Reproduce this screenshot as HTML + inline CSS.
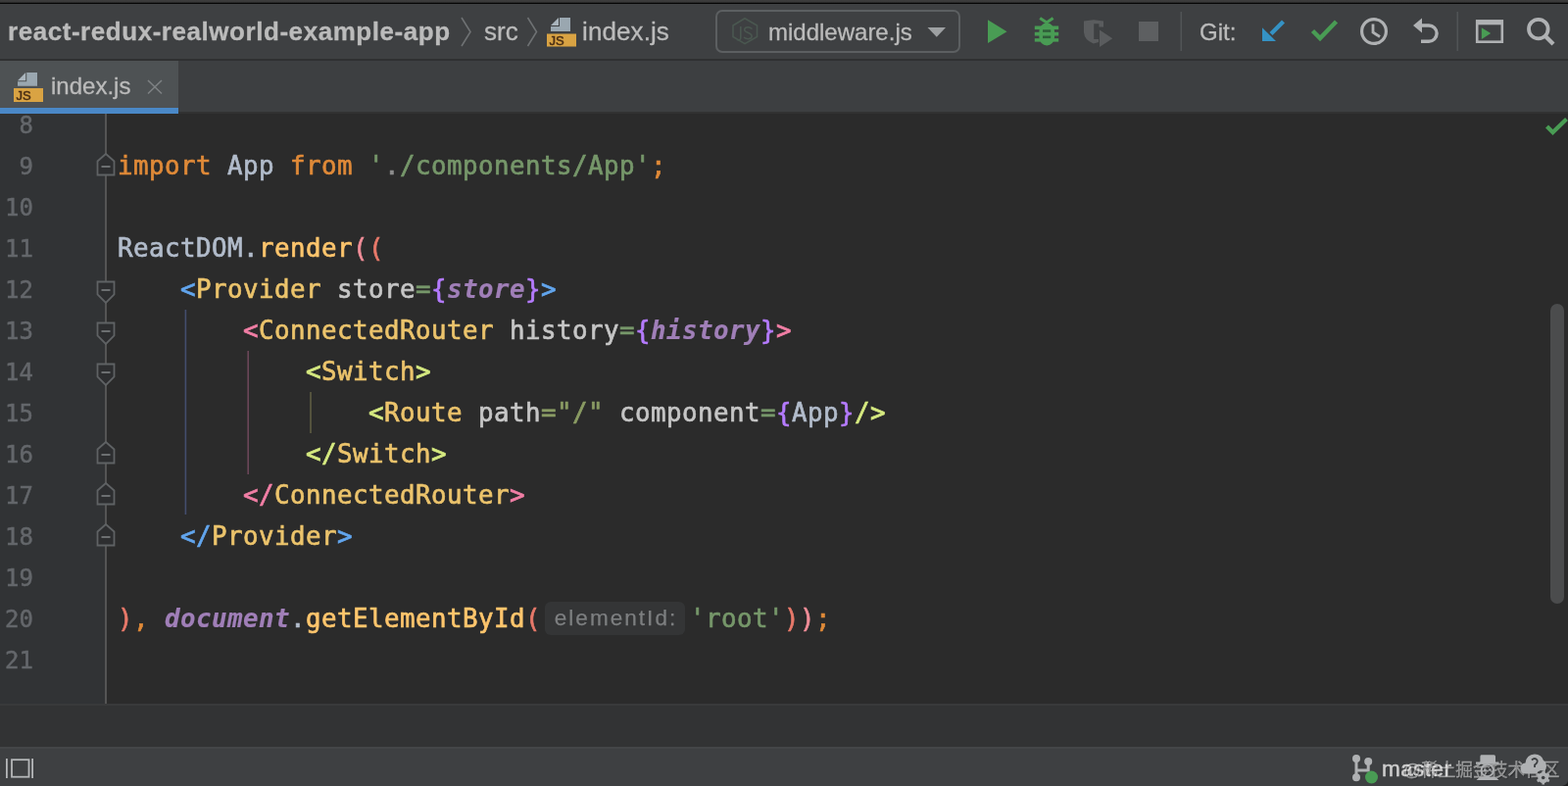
<!DOCTYPE html>
<html lang="en">
<head>
<meta charset="utf-8">
<title>index.js</title>
<style>
*{box-sizing:border-box;margin:0;padding:0}
html,body{width:1600px;height:802px;overflow:hidden;background:#2b2b2b}
body{position:relative;font-family:"Liberation Sans","Noto Sans CJK SC",sans-serif;color:#bbbbbb}
.abs{position:absolute}
.code,.ln,.ui,.hint{will-change:transform}
#topline{left:0;top:0;width:1600px;height:4px;background:linear-gradient(#3d3d3d 0,#383838 2.4px,#0a0a0a 2.7px,#050505 3.7px,#3e4042 4px)}
#toolbar{left:0;top:3px;width:1600px;height:58px;background:#3e4042}
#tbborder{left:0;top:60px;width:1600px;height:2px;background:#2f3031}
#tabs{left:0;top:62px;width:1600px;height:54px;background:#3d3f41}
#tab{left:0;top:62px;width:182px;height:48px;background:#4e5254}
#tabline{left:0;top:110px;width:182px;height:6px;background:#4a88c7}
#tabsborder{left:182px;top:114px;width:1418px;height:2px;background:#323232}
#gutter{left:0;top:116px;width:107px;height:602px;background:#313335}
#gutline{left:107px;top:116px;width:2px;height:602px;background:#555555}
#editor{left:109px;top:116px;width:1491px;height:602px;background:#2b2b2b}
#band{left:0;top:718px;width:1600px;height:44px;background:#323334}
#bandtop{left:0;top:718px;width:1600px;height:2px;background:#393a3b}
#status{left:0;top:762px;width:1600px;height:40px;background:#3e4042}
#statustop{left:0;top:762px;width:1600px;height:2px;background:#444648}
.ui{position:absolute;white-space:nowrap;color:#bbbbbb;font-size:24px;line-height:30px;-webkit-text-stroke:0.3px currentColor}
.ln{position:absolute;left:0;width:34px;text-align:right;font-family:"DejaVu Sans Mono","Liberation Mono",monospace;font-size:24px;line-height:42px;height:42px;color:#64676b;white-space:pre;-webkit-text-stroke:0.5px currentColor}
.code{position:absolute;left:120px;font-family:"DejaVu Sans Mono","Liberation Mono",monospace;font-size:25.8px;letter-spacing:0.468px;line-height:42px;height:42px;white-space:pre;color:#b2bccb;-webkit-text-stroke:0.65px currentColor}
.k{color:#e08a38}.s{color:#76976a}.f{color:#ffc66d}.t{color:#ecc46c}.a{color:#c6c6c6}.d{color:#8c8c8c}.v{color:#8a9b63}
.g{color:#a07fb8;font-style:italic;font-weight:bold;-webkit-text-stroke:0.2px currentColor}
.r1{color:#f08d98}.r2{color:#e8796a}.r3{color:#62a6ee}.r4{color:#f27fa6}.r5{color:#d6ea80}.r6{color:#b57bff}
.hint{position:absolute;background:#343536;border-radius:6px;color:#7d7f80;font-family:"Liberation Sans",sans-serif;font-size:22.5px;letter-spacing:2.05px;line-height:33px;height:34px;padding:0 0 0 2px;text-align:center;-webkit-text-stroke:0.25px currentColor}
.guide{position:absolute;width:2px}
</style>
</head>
<body>
<div class="abs" id="toolbar"></div>
<div class="abs" id="topline"></div>
<div class="abs" id="tbborder"></div>
<div class="abs" id="tabs"></div>
<div class="abs" id="tab"></div>
<div class="abs" id="tabline"></div>
<div class="abs" id="tabsborder"></div>
<div class="abs" id="gutter"></div>
<div class="abs" id="gutline"></div>
<div class="abs" id="editor"></div>
<div class="abs" id="band"></div>
<div class="abs" id="bandtop"></div>
<div class="abs" id="status"></div>
<div class="abs" id="statustop"></div>

<!-- toolbar text -->
<div class="ui" id="crumb1" style="left:8px;top:17px;font-weight:bold;font-size:26px;letter-spacing:0.55px">react-redux-realworld-example-app</div>
<div class="ui" id="crumb2" style="left:494px;top:17px;font-size:26px">src</div>
<div class="ui" id="crumb3" style="left:594px;top:17px;font-size:26px;letter-spacing:0.1px">index.js</div>
<div class="ui" id="runcfg" style="left:784px;top:18px">middleware.js</div>
<div class="ui" id="gitlbl" style="left:1224px;top:18px">Git:</div>
<div class="ui" id="tabname" style="left:52px;top:73px">index.js</div>
<div class="ui" id="branch" style="left:1410px;top:770px;font-size:22.5px;letter-spacing:0.45px;color:#cdcdcd;-webkit-text-stroke:0.5px #cdcdcd">master</div>
<div class="ui" id="wm" style="left:1432px;top:771px;font-size:17.7px;color:rgba(255,255,255,.42);text-shadow:1px 1px 1px rgba(0,0,0,.35)">@稀土掘金技术社区</div>


<!-- ICONS-START -->
<svg class="abs" id="tbicons" style="left:0;top:0" width="1600" height="62" viewBox="0 0 1600 62">
  <!-- breadcrumb chevrons -->
  <polyline points="471,18 480,32.5 471,47" fill="none" stroke="#6e7173" stroke-width="1.6"/>
  <polyline points="538.5,18 547.5,32.5 538.5,47" fill="none" stroke="#6e7173" stroke-width="1.6"/>
  <!-- js file icon -->
  <g id="jsicon1">
    <path d="M571,18 H582 V32 H562 V27 H571 Z" fill="#9aa7b0"/>
    <path d="M570,18 V26 H562 Z" fill="#a9b4bc"/>
    <rect x="558" y="34.5" width="30" height="13" fill="#d9a343"/>
    <text x="560.5" y="45.8" font-family="Liberation Sans, sans-serif" font-size="13" fill="#4a2e14" stroke="#4a2e14" stroke-width="0.5">JS</text>
  </g>
  <!-- run config box -->
  <rect x="731" y="11" width="248" height="42" rx="6" ry="6" fill="none" stroke="#5c5f61" stroke-width="2"/>
  <g fill="none" stroke="#4a5750" stroke-width="1.600">
    <path d="M760,18.800 L772.500,26 V37.500 L760,44.600 L748,37.500 V26 Z"/>
    <path d="M755.800,27 V38.500 Q755.800,41.800 752,40.500"/>
    <path d="M767.500,29.500 Q764,26.500 760.500,28.500 Q758,31.500 763,33.300 Q768.800,35.500 766.500,38.800 Q763,41 759,38.200"/>
  </g>
  <path d="M946.5,28 H965 L955.8,37.8 Z" fill="#9da0a2"/>
  <!-- run -->
  <path d="M1008,20.3 L1027.5,32.2 L1008,44 Z" fill="#499c54"/>
  <!-- debug bug -->
  <g id="bug" fill="#499c54">
    <path d="M1061.200,18.500 L1068,22.900 L1074.600,18.500" fill="none" stroke="#499c54" stroke-width="3"/>
    <rect x="1060.400" y="23.600" width="15.600" height="23" rx="7.800" ry="8.500"/>
    <rect x="1055.800" y="26.500" width="24.400" height="3.600"/>
    <rect x="1055.800" y="32.800" width="24.400" height="3.700"/>
    <rect x="1055.800" y="39.200" width="24.400" height="3.400"/>
    <rect x="1064" y="30.300" width="8.200" height="2.500" fill="#2f5e39"/>
    <rect x="1064" y="36.500" width="8.200" height="2.600" fill="#2f5e39"/>
  </g>
  <!-- coverage (disabled) -->
  <path d="M1106,21.600 L1116,20.200 L1126,21.600 V27.600 H1121.400 V24.200 H1116.200 V40 H1121 V43 Q1118.500,44 1115.800,44.400 Q1106.500,41 1106,33 Z" fill="#5a5c5e"/>
  <path d="M1122,30.500 L1135.200,39.200 L1122,48 Z" fill="#5a5c5e" stroke="#3e4042" stroke-width="1.800" paint-order="stroke"/>
  <!-- stop (disabled) -->
  <rect x="1162" y="22" width="20" height="20" fill="#5d5f61"/>
  <!-- separators -->
  <rect x="1204.500" y="12" width="1.500" height="40" fill="#515456"/>
  <rect x="1486.500" y="12" width="1.500" height="40" fill="#515456"/>
  <!-- git update (blue arrow) -->
  <path d="M1309.500,22 L1297,34.500" stroke="#3592c4" stroke-width="4.200" fill="none"/>
  <path d="M1288,28.200 V42 H1302 Z" fill="#3592c4"/>
  <!-- git commit (green check) -->
  <polyline points="1339.500,31.500 1347,39 1363.500,22" fill="none" stroke="#499c54" stroke-width="4.400"/>
  <!-- history clock -->
  <circle cx="1402" cy="32" r="12.400" fill="none" stroke="#afb1b3" stroke-width="3.200"/>
  <polyline points="1401,24.500 1401,33 1408,37.500" fill="none" stroke="#afb1b3" stroke-width="2.800"/>
  <!-- rollback -->
  <path d="M1442,26 L1451,18.500 V33.500 Z" fill="#afb1b3"/>
  <path d="M1450,26 H1458 A8,8 0 0 1 1458,42.200 H1450" fill="none" stroke="#afb1b3" stroke-width="3.400"/>
  <!-- run anything window -->
  <rect x="1507.200" y="21.500" width="25.600" height="21.200" fill="none" stroke="#afb1b3" stroke-width="2.600"/>
  <rect x="1506" y="20.300" width="28" height="5" fill="#afb1b3"/>
  <path d="M1511.800,28.200 L1521.200,34 L1511.800,39.900 Z" fill="#499c54"/>
  <!-- search -->
  <circle cx="1569.800" cy="29.600" r="9.800" fill="none" stroke="#afb1b3" stroke-width="3.800"/>
  <path d="M1576.500,36.500 L1585,45" stroke="#afb1b3" stroke-width="4.200" fill="none"/>
</svg>

<svg class="abs" id="tabicons" style="left:0;top:62px" width="200" height="54" viewBox="0 62 200 54">
  <path d="M27.200,74 H38 V87.800 H18 V83.200 H27.200 Z" fill="#9aa7b0"/>
  <path d="M26.200,74 V82.200 H18 Z" fill="#a9b4bc"/>
  <rect x="14" y="90" width="30" height="14" fill="#d9a343"/>
  <text x="16.500" y="101.800" font-family="Liberation Sans, sans-serif" font-size="13" fill="#4a2e14" stroke="#4a2e14" stroke-width="0.5">JS</text>
  <path d="M151,82 L165,95.500 M165,82 L151,95.500" stroke="#7d8183" stroke-width="1.600" fill="none"/>
</svg>

<!-- editor: gutter fold markers, guides, checkmark, scrollbar -->
<svg class="abs" id="edicons" style="left:0;top:116px" width="1600" height="602" viewBox="0 116 1600 602">
  <g fill="#2d2e30" stroke="#5f6264" stroke-width="1.800">
    <!-- end markers (pointing up): rows 9,16,17,18 -->
    <path d="M108,157 L116.500,164.500 V178.500 H99.500 V164.500 Z"/>
    <path d="M108,451 L116.500,458.500 V472.500 H99.500 V458.500 Z"/>
    <path d="M108,493 L116.500,500.500 V514.500 H99.500 V500.500 Z"/>
    <path d="M108,535 L116.500,542.500 V556.500 H99.500 V542.500 Z"/>
    <!-- start markers (pointing down): rows 12,13,14 -->
    <path d="M99.500,287.500 H116.500 V300.500 L108,309 L99.500,300.500 Z"/>
    <path d="M99.500,329.500 H116.500 V342.500 L108,351 L99.500,342.500 Z"/>
    <path d="M99.500,371.500 H116.500 V384.500 L108,393 L99.500,384.500 Z"/>
  </g>
  <g stroke="#6c6f71" stroke-width="2">
    <path d="M103.500,170 H112.500"/>
    <path d="M103.500,464 H112.500"/>
    <path d="M103.500,506 H112.500"/>
    <path d="M103.500,548 H112.500"/>
    <path d="M103.500,296 H112.500"/>
    <path d="M103.500,338 H112.500"/>
    <path d="M103.500,380 H112.500"/>
  </g>
  <!-- indent guides -->
  <rect x="188.600" y="316" width="1.600" height="209" fill="#444e6e"/>
  <rect x="252.400" y="358" width="1.600" height="126" fill="#6a4658"/>
  <rect x="316.200" y="400" width="1.600" height="42" fill="#5f5d42"/>
  <!-- inspection ok checkmark -->
  <polyline points="1578.500,129 1584.500,135 1598.500,121.500" fill="none" stroke="#499c54" stroke-width="4.200"/>
  <!-- scrollbar thumb -->
  <rect x="1582" y="310" width="14" height="306" rx="7" ry="7" fill="#4b4c4d"/>
</svg>

<!-- status bar icons -->
<svg class="abs" id="sticons" style="left:0;top:762px" width="1600" height="40" viewBox="0 762 1600 40">
  <rect x="12" y="775.200" width="17.500" height="17.500" fill="none" stroke="#b5b7b9" stroke-width="1.800"/>
  <rect x="6" y="774" width="1.800" height="20" fill="#b5b7b9"/>
  <rect x="32.200" y="774" width="1.800" height="20" fill="#b5b7b9"/>
  <!-- git branch -->
  <g stroke="#afb1b3" stroke-width="3" fill="none">
    <path d="M1384,774 V793"/>
    <path d="M1384,786 H1396.200 V777"/>
  </g>
  <circle cx="1384" cy="774" r="4" fill="#afb1b3"/>
  <circle cx="1384" cy="793.300" r="4" fill="#afb1b3"/>
  <circle cx="1396.200" cy="777" r="4" fill="#afb1b3"/>
  <circle cx="1399.500" cy="793" r="6.500" fill="#499c54"/>
  <!-- hector -->
  <g fill="#afb1b3">
    <path d="M1511.500,770.200 H1524.500 Q1526,770.200 1526,772 V777.600 H1529.500 V779.800 H1506 V777.600 H1510.400 V772 Q1510.400,770.200 1511.500,770.200 Z"/>
    <path d="M1510,792.800 H1526 L1529.500,796 H1506.500 Z"/>
  </g>
  <circle cx="1517.700" cy="786" r="6.200" fill="none" stroke="#afb1b3" stroke-width="1.800"/>
  <circle cx="1515.300" cy="785.500" r="1.300" fill="#afb1b3"/>
  <circle cx="1520.300" cy="785.500" r="1.300" fill="#afb1b3"/>
  <!-- cloud + gear -->
  <path d="M1557,789.500 Q1551.500,789.500 1551.500,784 Q1551.500,779 1556.500,778.500 Q1557.500,770 1566,769.500 Q1573,769.500 1575,776 Q1578,777.500 1578,782 Q1578,785 1576,786.500 Q1571,784.500 1567.500,789.500 Z" fill="#afb1b3"/>
  <path d="M1563,775.500 Q1566,772.500 1568.500,775.500 Q1569.500,778 1566,780.500 V783" fill="none" stroke="#3c3f41" stroke-width="1.800"/>
  <circle cx="1574.700" cy="793.500" r="4" fill="none" stroke="#afb1b3" stroke-width="3"/>
  <g stroke="#afb1b3" stroke-width="2.600">
    <path d="M1574.700,786.500 V800.500"/>
    <path d="M1568.600,790 L1580.800,797"/>
    <path d="M1568.600,797 L1580.800,790"/>
  </g>
  <circle cx="1574.700" cy="793.500" r="1.800" fill="#3c3f41"/>
  <!-- window corner -->
  <path d="M1600,797 Q1599,801 1594,802 H1600 Z" fill="#1e1f20"/>
</svg>
<!-- ICONS-END -->

<!-- line numbers -->
<div class="ln" style="top:107px">8</div>
<div class="ln" style="top:149px">9</div>
<div class="ln" style="top:191px">10</div>
<div class="ln" style="top:233px">11</div>
<div class="ln" style="top:275px">12</div>
<div class="ln" style="top:317px">13</div>
<div class="ln" style="top:359px">14</div>
<div class="ln" style="top:401px">15</div>
<div class="ln" style="top:443px">16</div>
<div class="ln" style="top:485px">17</div>
<div class="ln" style="top:527px">18</div>
<div class="ln" style="top:569px">19</div>
<div class="ln" style="top:611px">20</div>
<div class="ln" style="top:653px">21</div>

<!-- code -->
<div class="code" style="top:148px"><span class="k">import</span> App <span class="k">from</span> <span class="s">'<span class="d">.</span>/components/App'</span><span class="k">;</span></div>
<div class="code" style="top:232px">ReactDOM.<span class="f">render</span><span class="r1">(</span><span class="r2">(</span></div>
<div class="code" style="top:274px">    <span class="r3">&lt;</span><span class="t">Provider</span> <span class="a">store</span><span class="s">=</span><span class="r6">{</span><span class="g">store</span><span class="r6">}</span><span class="r3">&gt;</span></div>
<div class="code" style="top:316px">        <span class="r4">&lt;</span><span class="t">ConnectedRouter</span> <span class="a">history</span><span class="s">=</span><span class="r6">{</span><span class="g">history</span><span class="r6">}</span><span class="r4">&gt;</span></div>
<div class="code" style="top:358px">            <span class="r5">&lt;</span><span class="t">Switch</span><span class="r5">&gt;</span></div>
<div class="code" style="top:400px">                <span class="r5">&lt;</span><span class="t">Route</span> <span class="a">path</span><span class="v">="/"</span> <span class="a">component</span><span class="s">=</span><span class="r6">{</span>App<span class="r6">}</span><span class="r5">/&gt;</span></div>
<div class="code" style="top:442px">            <span class="r5">&lt;/</span><span class="t">Switch</span><span class="r5">&gt;</span></div>
<div class="code" style="top:484px">        <span class="r4">&lt;/</span><span class="t">ConnectedRouter</span><span class="r4">&gt;</span></div>
<div class="code" style="top:526px">    <span class="r3">&lt;/</span><span class="t">Provider</span><span class="r3">&gt;</span></div>
<div class="code" style="top:610px"><span class="r2">)</span><span class="k">,</span> <span class="g">document</span>.<span class="f">getElementById</span><span class="r2">(</span></div>
<div class="hint" id="hint" style="left:556px;top:614px;width:143px"><span id="hinttxt">elementId:</span></div>
<div class="code" style="top:610px;left:704px"><span class="s">'root'</span><span class="r2">)</span><span class="r1">)</span><span class="k">;</span></div>
</body>
</html>
